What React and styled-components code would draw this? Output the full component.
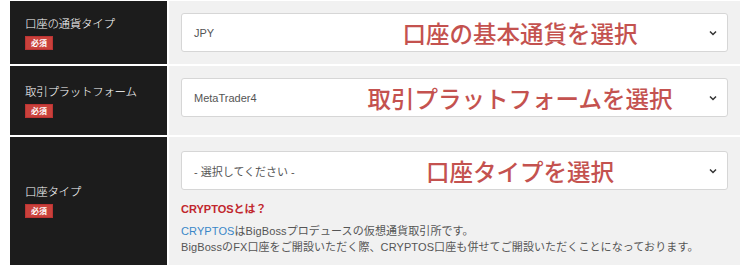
import React from 'react'
import styled, { createGlobalStyle } from 'styled-components'

const GlobalStyle = createGlobalStyle`
  body {
    margin: 0;
    background: #fff;
    font-family: "Liberation Sans", "Noto Sans CJK JP", sans-serif;
  }
`

const rows = [
  { label: '口座の通貨タイプ', value: 'JPY', note: '口座の基本通貨を選択', height: 63, pad: '12px 12px 11px' },
  { label: '取引プラットフォーム', value: 'MetaTrader4', note: '取引プラットフォームを選択', height: 69, pad: '12px 12px 18px' },
  { label: '口座タイプ', value: '- 選択してください -', note: '口座タイプを選択', height: 128, pad: '14px 12px 0', extra: true },
]

const App = () => {
  return (
    <Page>
      <GlobalStyle />
      <FormTable>
        {rows.map((r) => (
          <Row key={r.label} $h={r.height}>
            <Head>
              <Label>{r.label}</Label>
              <Badge>必須</Badge>
            </Head>
            <Cell $pad={r.pad}>
              <SelectBox>
                <Value>{r.value}</Value>
                <Chevron viewBox="0 0 8 6" width="8" height="6">
                  <path d="M1 1.5 L4 4.5 L7 1.5" fill="none" stroke="#333" strokeWidth="1.5" />
                </Chevron>
                <Note>{r.note}</Note>
              </SelectBox>
              {r.extra && (
                <Info>
                  <InfoTitle>CRYPTOSとは？</InfoTitle>
                  <InfoText>
                    <Link>CRYPTOS</Link>はBigBossプロデュースの仮想通貨取引所です。<br />
                    BigBossのFX口座をご開設いただく際、CRYPTOS口座も併せてご開設いただくことになっております。
                  </InfoText>
                </Info>
              )}
            </Cell>
          </Row>
        ))}
      </FormTable>
    </Page>
  )
}

const Page = styled.div`
  width: 750px;
  height: 268px;
  overflow: hidden;
  padding: 1px 10px 0 10px;
  box-sizing: border-box;
`

const FormTable = styled.div`
  display: flex;
  flex-direction: column;
  gap: 2px;
  width: 730px;
`

const Row = styled.div`
  display: grid;
  grid-template-columns: 157px 1fr;
  column-gap: 2px;
  height: ${(p) => p.$h}px;
`

const Head = styled.div`
  background: #1c1c1c;
  display: flex;
  flex-direction: column;
  justify-content: center;
  align-items: flex-start;
  padding-left: 15px;
  gap: 6px;
`

const Label = styled.div`
  color: #fff;
  font-family: "Noto Sans CJK JP", sans-serif;
  font-size: 11.5px;
  font-weight: 300;
  line-height: 14px;
  letter-spacing: -0.3px;
`

const Badge = styled.span`
  background: #c9413b;
  color: #fff;
  font-family: "Noto Sans CJK JP", sans-serif;
  font-size: 8px;
  font-weight: 700;
  line-height: 12px;
  padding: 0 5px;
  border: 1px solid #b33;
`

const Cell = styled.div`
  background: #f1f1f1;
  padding: ${(p) => p.$pad};
  box-sizing: border-box;
`

const SelectBox = styled.div`
  position: relative;
  height: 39px;
  background: #fff;
  border: 1px solid #d6d6d6;
  border-radius: 3px;
  box-sizing: border-box;
  display: flex;
  align-items: center;
  padding: 0 10px 0 12px;
`

const Value = styled.span`
  flex: 1;
  font-family: "Liberation Sans", "Noto Sans CJK JP", sans-serif;
  font-size: 11px;
  color: #555;
`

const Chevron = styled.svg`
  display: block;
`

const Note = styled.span`
  position: absolute;
  left: 338px;
  top: 50%;
  transform: translate(-50%, -50%);
  white-space: nowrap;
  font-family: "Noto Sans CJK JP", sans-serif;
  font-size: 23.5px;
  font-weight: 500;
  color: #c4524f;
  pointer-events: none;
`

const Info = styled.div`
  margin-top: 11px;
  font-family: "Liberation Sans", "Noto Sans CJK JP", sans-serif;
  font-size: 11px;
`

const InfoTitle = styled.div`
  color: #c1272d;
  font-weight: 700;
  line-height: 16px;
`

const InfoText = styled.p`
  margin: 6px 0 0;
  color: #555;
  line-height: 16px;
  letter-spacing: 0.1px;
`

const Link = styled.span`
  color: #3a87c8;
`

export default App
